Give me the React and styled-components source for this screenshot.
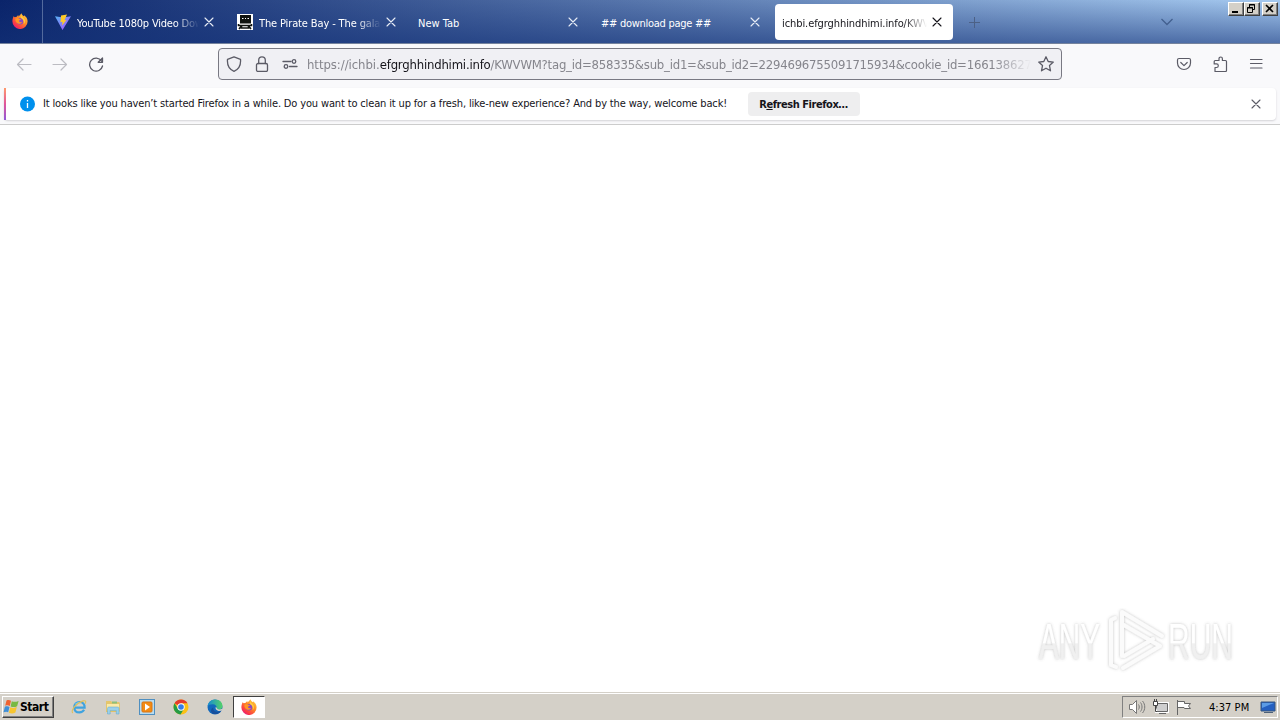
import React from 'react'
import styled, { createGlobalStyle } from 'styled-components'

const GlobalStyle = createGlobalStyle`
* { box-sizing: border-box; }
body {
margin: 0;
overflow: hidden;
background: #ffffff;
}
svg { display: block; flex: none; }
`

const Screen = styled.div`
width: 1280px;
height: 720px;
display: flex;
flex-direction: column;
font-family: "DejaVu Sans Condensed", "DejaVu Sans", sans-serif;
font-stretch: condensed;
font-size: 11px;
color: #15141a;
`

const TitleBar = styled.header`
height: 44px;
display: flex;
align-items: flex-start;
border-bottom: 1px solid #75839d;
background: linear-gradient(to bottom, rgba(20, 50, 120, 0) 0%, rgba(20, 50, 120, 0.58) 100%),
linear-gradient(to right, #0a246a, #a6caf0);
`

const ViewButton = styled.div`
width: 43px;
height: 43px;
padding: 13px 0 0 12px;
border-right: 1px solid #536a9d;
`

const Tabs = styled.div`
display: flex;
gap: 4px;
padding: 4px 0 0 4px;
`

const TabBox = styled.div`
width: 178px;
height: 36px;
display: flex;
align-items: center;
border-radius: 4px;
padding: 0 11px 0 8px;
gap: 5px;
color: ${props => props.$active ? '#15141a' : '#ffffff'};
background: ${props => props.$active ? '#ffffff' : 'transparent'};
`

const TabLabel = styled.span`
flex: 1;
height: 18px;
line-height: 18px;
margin-top: 3px;
margin-left: ${props => props.$shift || 0}px;
white-space: nowrap;
overflow: hidden;
letter-spacing: ${props => props.$spacing || 0}px;
mask-image: ${props => props.$fade ? 'linear-gradient(to left, transparent, black 24px)' : 'none'};
`

const NewTab = styled.div`
padding: 16px 0 0 15px;
`

const TabList = styled.div`
margin-left: auto;
padding: 16px 54px 0 0;
`

const WindowButtons = styled.div`
display: flex;
padding: 2px 2px 0 0;
`

const WindowButton = styled.div`
width: 16px;
height: 14px;
margin-left: ${props => props.$gap || 0}px;
background: #d4d0c8;
border: 1px solid;
border-color: #ffffff #404040 #404040 #ffffff;
box-shadow: inset -1px -1px #808080;
`

const Toolbar = styled.div`
height: 44px;
display: flex;
align-items: center;
padding: 0 16px 4px;
background: #f9f9fb;
`

const NavButtons = styled.div`
display: flex;
gap: 20px;
width: 202px;
`

const UrlBar = styled.div`
width: 844px;
height: 32px;
display: flex;
align-items: center;
padding: 0 7px;
border: 1px solid #797983;
border-radius: 4px;
background: #f0f0f4;
`

const UrlIcons = styled.div`
display: flex;
gap: 12px;
`

const UrlText = styled.div`
width: 724px;
margin: 2px 7px 0 9px;
font-size: 13px;
line-height: 22px;
letter-spacing: -0.22px;
white-space: nowrap;
overflow: hidden;
color: #85858c;
mask-image: linear-gradient(to left, transparent, black 38px);

b {
font-weight: 400;
letter-spacing: -0.2px;
color: #15141a;
}
`

const Scheme = styled.span`
letter-spacing: -0.05px;
`

const ToolbarEnd = styled.div`
display: flex;
gap: 20px;
margin-left: auto;
`

const NoticeArea = styled.div`
height: 37px;
padding: 0 4px;
background: #f9f9fb;
border-bottom: 1px solid #cccccc;
`

const Notice = styled.div`
height: 32px;
display: flex;
align-items: center;
background: #ffffff;
border-radius: 4px;
box-shadow: 0 1px 2px rgba(58, 57, 68, 0.2);
padding-right: 15px;
`

const Accent = styled.div`
width: 2px;
height: 32px;
margin-right: 13px;
background: linear-gradient(#ff9a6c, #e0559a 50%, #9059d8);
`

const NoticeText = styled.span`
width: 705px;
margin-left: 8px;
padding-bottom: 1px;
white-space: nowrap;
letter-spacing: -0.148px;
`

const RefreshButton = styled.button`
width: 112px;
height: 24px;
padding: 0 1px 0 0;
border: 0;
border-radius: 4px;
background: #eeeeef;
font: bold 11px "DejaVu Sans Condensed", "DejaVu Sans", sans-serif;
font-stretch: condensed;
letter-spacing: -0.45px;
color: #15141a;
`

const NoticeClose = styled.div`
margin-left: auto;
`

const Page = styled.main`
flex: 1;
display: flex;
justify-content: flex-end;
align-items: flex-end;
padding: 0 34px 18px 0;
`

const Taskbar = styled.footer`
height: 28px;
display: flex;
align-items: center;
padding: 1px 2px 0;
background: #d4d0c8;
border-top: 1px solid #d4d0c8;
box-shadow: inset 0 1px #ffffff;
`

const StartButton = styled.div`
width: 52px;
height: 22px;
display: flex;
align-items: center;
font-weight: bold;
font-size: 12px;
letter-spacing: -0.45px;
color: #000000;
border: 1px solid;
border-color: #ffffff #404040 #404040 #ffffff;
box-shadow: inset -1px -1px #808080;
`

const Launchers = styled.div`
display: flex;
align-items: center;
gap: 18px;
margin-left: 17px;
`

const RunningApp = styled.div`
width: 32px;
height: 22px;
margin-left: 10px;
padding: 2px 0 0 7px;
background: #ffffff;
border: 1px solid;
border-color: #404040 #ffffff #ffffff #404040;
`

const Tray = styled.div`
height: 22px;
width: 156px;
margin-left: auto;
display: flex;
align-items: center;
padding: 0 1px 0 5px;
border: 1px solid;
border-color: #808080 #ffffff #ffffff #808080;
`

const TrayIcons = styled.div`
display: flex;
gap: 6px;
`

const Clock = styled.span`
margin-left: 17px;
margin-right: auto;
letter-spacing: 0.05px;
color: #000000;
`

const Stroke = ({ size = 16, color = '#5b5b66', width = 1.2, children }) => (
    <svg width={size} height={size} viewBox="0 0 16 16" fill="none" stroke={color} strokeWidth={width} strokeLinecap="round" strokeLinejoin="round">
        {children}
    </svg>
)

const CloseIcon = ({ color }) => (
    <svg width="10" height="10" viewBox="0 0 10 10" stroke={color} strokeWidth="1.1" strokeLinecap="round">
        <path d="M1 1l8 8M9 1L1 9" />
    </svg>
)

const FirefoxIcon = () => (
    <svg width="16" height="16" viewBox="0 0 16 16">
        <defs>
            <linearGradient id="fox" x1="1" y1="0" x2="0.2" y2="1">
                <stop offset="0" stopColor="#ffe04a" />
                <stop offset="0.45" stopColor="#ff8a24" />
                <stop offset="0.8" stopColor="#fb3b47" />
                <stop offset="1" stopColor="#e31587" />
            </linearGradient>
        </defs>
        <path fill="url(#fox)" d="M1.6 3.2l1.1 1.1 2-.6L6.2 2l.4 1.4C7.6 2.6 8.4 1.6 9.5.3c.3 1.5 1.3 2.3 2.4 3l.1-1.1c2.2 1.4 3.6 3.5 3.6 6.2A7.6 7.6 0 0 1 .4 8.5c0-2 .5-3.7 1.2-5.3z" />
        <circle cx="8" cy="8.3" r="3.3" fill="#8a48c4" />
        <path fill="#ff9624" d="M3.5 5.5c1.6-.9 3.1-.7 4.2.4l1.5.2c-.6 1-1.3 1.2-2.1 1.5-.4 1.5 1.5 2.2 3.2 1.1-.8 2-2.8 2.6-4.5 1.8C3.7 9.5 3 7.3 3.5 5.5z" />
        <path fill="#ffce3b" d="M9.3 1.4c.2 2.8 3.5 3.1 3.7 6.4.1 1.6-.5 2.7-1.3 3.5.6-2.9-.2-4.8-2.2-5.9C8.5 4.6 8.4 3 9.3 1.4z" />
    </svg>
)

const VividIcon = () => (
    <svg width="16" height="16" viewBox="0 0 16 16">
        <defs>
            <linearGradient id="vee" x1="0" y1="0" x2="1" y2="1">
                <stop offset="0" stopColor="#55b5f5" />
                <stop offset="1" stopColor="#b14aff" />
            </linearGradient>
        </defs>
        <path d="M0 2.2L7.5 16 16 2.2 8 3.6z" fill="url(#vee)" />
        <path d="M12 .5L6 1.6 5.5 8.2l2-.4-.5 3.7L11.500 6l-2 .2z" fill="#ffc928" />
    </svg>
)

const PirateIcon = () => (
    <svg width="16" height="16" viewBox="0 0 16 16">
        <rect width="16" height="16" fill="#ffffff" />
        <path d="M3 1h11v8.5H3z" fill="#10130f" />
        <path d="M5 4.500h1.500M8 4.500h1M10.500 4.500H12" stroke="#ffffff" />
        <path d="M1.500 10v1.500h13V10M2 15l2-2.500M14 15l-2-2.500M4.500 11v3h7v-3" stroke="#10130f" strokeWidth="1.6" fill="none" />
    </svg>
)

const ChromeIcon = () => (
    <svg width="16" height="16" viewBox="0 0 16 16">
        <circle cx="8" cy="8" r="7.5" fill="#fbc116" />
        <path d="M8 8L1.5 4.25A7.5 7.5 0 0 1 14.5 4.25H8z" fill="#e33b2e" />
        <path d="M1.5 4.25A7.5 7.5 0 0 0 7.5 15.5L11 9.8 4.8 9.5z" fill="#259b45" />
        <circle cx="8" cy="8" r="3.7" fill="#ffffff" />
        <circle cx="8" cy="8" r="2.8" fill="#357de8" />
    </svg>
)

const EdgeIcon = () => (
    <svg width="16" height="16" viewBox="0 0 16 16">
        <defs>
            <linearGradient id="edge" x1="0" y1="0.3" x2="1" y2="0.3">
                <stop offset="0" stopColor="#168bd3" />
                <stop offset="1" stopColor="#54d268" />
            </linearGradient>
        </defs>
        <circle cx="8" cy="8" r="7.5" fill="#1268bc" />
        <path d="M.5 7.5C1 3.4 4 .5 8 .5c4.3 0 7.5 2.8 7.5 6.5 0 2.3-1.7 3.7-4 3.7-1.5 0-2.5-.6-1.9-1.5C10 7 8.500 5.200 5.700 5.200 3.300 5.200 1.300 6.100.5 7.500z" fill="url(#edge)" />
        <path d="M6.200 8.500c-.5 3.400 3 5.400 7.900 3.400-2 2.600-5.500 3.600-7.700 3C3 13.300 3.600 9.700 6.200 8.500z" fill="#174f9c" />
        <path d="M9 8.500c.3 2.600 3 3.300 6.500 2" stroke="#d4d0c8" strokeWidth="1.5" fill="none" />
    </svg>
)

const ExplorerIcon = () => (
    <svg width="16" height="16" viewBox="0 0 17 17" fill="none">
        <path d="M3.500 9.200h11c.2-4-2-6-5.400-6-3.500 0-5.600 2.400-5.600 5.700 0 3.500 2.400 5.300 5.500 5.300 2.400 0 4-1 4.900-2.700" stroke="#3fa3df" strokeWidth="2.3" />
        <path d="M4.500 5.500C6.500 4 8 3.800 10 4" stroke="#8cdaf7" />
        <path d="M2 14.800C-1 13 5 4.500 13 2c3-.7 3.200 1 2 3" stroke="#dfc05c" strokeWidth="1.2" />
    </svg>
)

const FolderIcon = () => (
    <svg width="16" height="16" viewBox="0 0 16 16">
        <path d="M1 2h5l1 1h7.500v10H1z" fill="#e5c66c" />
        <path d="M1.500 4.500h13V12h-13z" fill="#fbeaa8" stroke="#d9b85c" strokeWidth=".6" />
        <path d="M7 2.500h5v2H7z" fill="#8cc07a" />
        <path d="M2.500 15V9.500C2.500 8.500 3.100 8 4 8h8.500c1 0 1.500.5 1.500 1.500V15h-2.700v-3.500H5.200V15z" fill="#9ad0ea" stroke="#5ea7cd" strokeWidth=".5" />
    </svg>
)

const PlayerIcon = () => (
    <svg width="16" height="16" viewBox="0 0 16 16">
        <rect x=".5" y=".5" width="15" height="15" fill="#b8dcf0" stroke="#4f8fc0" />
        <rect x="3" y="3" width="10" height="10" rx="1" fill="#f38b13" stroke="#d97514" />
        <path d="M6 4.500L11 8l-5 3.500z" fill="#ffffff" />
    </svg>
)

const WindowsIcon = () => (
    <svg width="17" height="16" viewBox="0 0 17 16">
        <path d="M3.500 1.500C5 .7 6.700.9 8 1.800L6.800 7C5.500 6.200 4 6.200 2.200 6.800z" fill="#ef6331" />
        <path d="M8.800 2.200c1.700.9 4.200.8 6.800-.3l-1.500 5.300c-2 1.100-4.300 1.200-6.500.3z" fill="#78b943" />
        <path d="M1.900 7.800c1.700-.7 3.300-.6 4.600.2L5.200 13.300C3.900 12.500 2.400 12.600.5 13.300z" fill="#3f8fd7" />
        <path d="M7.300 8.300c2 .9 4.400.8 6.500-.2l-1.400 5.400c-2.100 1.100-4.300 1.200-6.500.2z" fill="#f7c52f" />
    </svg>
)

const Watermark = () => (
    <svg width="210" height="66" viewBox="0 0 210 66">
        <defs>
            <linearGradient id="mark" x1="0" y1="0" x2="0" y2="1">
                <stop offset="0.52" stopColor="#ffffff" />
                <stop offset="0.53" stopColor="#f0f0f0" />
            </linearGradient>
            <filter id="glow" x="-10%" y="-20%" width="120%" height="140%">
                <feDropShadow dx="0" dy="0" stdDeviation="1.6" floodColor="#777777" floodOpacity="0.45" />
            </filter>
        </defs>
        <g filter="url(#glow)" fill="url(#mark)" fontFamily="Liberation Sans Narrow, Liberation Sans, sans-serif" fontSize="50">
            <text x="3" y="51" textLength="61" lengthAdjust="spacingAndGlyphs">ANY</text>
            <text x="132" y="51" textLength="65" lengthAdjust="spacingAndGlyphs">RUN</text>
        </g>
        <g filter="url(#glow)" fill="none" stroke="#fbfbfb" strokeWidth="4" strokeLinejoin="round" strokeLinecap="round">
            <path d="M86 48V4l40 24M86 16l38 22L87 60M79 10l-4 2v45l5 2M88 48l29-17" />
        </g>
    </svg>
)

const tabs = [
    { title: 'YouTube 1080p Video Dow', icon: <VividIcon />, fade: true, shift: 1, spacing: -0.2 },
    { title: 'The Pirate Bay - The gala', icon: <PirateIcon />, fade: true, shift: 1, spacing: -0.13 },
    { title: 'New Tab', shift: -1, spacing: 0 },
    { title: '## download page ##', spacing: -0.27 },
    { title: 'ichbi.efgrghhindhimi.info/KWV', active: true, fade: true, shift: -1, spacing: -0.08 },
]

function App() {

    const tabsNaTela = tabs.map((tab) => {
        return <TabBox key={tab.title} $active={tab.active}>
            {tab.icon}
            <TabLabel $fade={tab.fade} $shift={tab.shift} $spacing={tab.spacing}>{tab.title}</TabLabel>
            <CloseIcon color={tab.active ? '#15141a' : '#e8edf6'} />
        </TabBox>
    })

    return (
        <Screen>
            <GlobalStyle />

            <TitleBar>
                <ViewButton><FirefoxIcon /></ViewButton>
                <Tabs>{tabsNaTela}</Tabs>
                <NewTab>
                    <svg width="12" height="12" viewBox="0 0 12 12" stroke="#4c6186"><path d="M6.5 1v11M1 6.5h11" /></svg>
                </NewTab>
                <TabList>
                    <svg width="14" height="12" viewBox="0 0 14 12" fill="none" stroke="#43608f" strokeWidth="1.3"><path d="M1.5 3L7 8.5 12.5 3" /></svg>
                </TabList>
                <WindowButtons>
                    <WindowButton>
                        <svg width="14" height="12"><rect x="3" y="8" width="6" height="2" /></svg>
                    </WindowButton>
                    <WindowButton>
                        <svg width="14" height="12" fill="none" stroke="#000000"><path d="M4.5 4V1.5h5v5H8M4 2h6M2.5 4.5h5v5h-5zM2 5h6" /></svg>
                    </WindowButton>
                    <WindowButton $gap={2}>
                        <svg width="14" height="12" stroke="#000000" strokeWidth="1.6"><path d="M3 2l7 7M10 2L3 9" /></svg>
                    </WindowButton>
                </WindowButtons>
            </TitleBar>

            <Toolbar>
                <NavButtons>
                    <Stroke color="#bcbcc2"><path d="M15 8.5H1.5M7 3L1.5 8.5 7 14" /></Stroke>
                    <Stroke color="#bcbcc2"><path d="M1 8.5h13.5M9 3l5.5 5.5L9 14" /></Stroke>
                    <Stroke width={1.3}><path d="M13.5 5A6.5 6.5 0 1 0 14.5 10M14.5 2v4.3h-4.3z" /></Stroke>
                </NavButtons>
                <UrlBar>
                    <UrlIcons>
                        <Stroke width={1.3}><path d="M8 .8l6.5 2.5c.5 5.6-1.5 10-6.5 12-5-2-7-6.4-6.5-12z" /></Stroke>
                        <Stroke width={1.3}><rect x="2.5" y="7.5" width="11" height="8" rx="1.5" /><path d="M4.7 7.5V4.2a3.3 3.3 0 0 1 6.6 0v3.3" /></Stroke>
                        <Stroke width={1.3}><path d="M1 5.5h8M7.5 10.5H15" /><circle cx="12" cy="5.5" r="1.8" /><circle cx="4" cy="10.5" r="1.8" /></Stroke>
                    </UrlIcons>
                    <UrlText><Scheme>https://ichbi.</Scheme><b>efgrghhindhimi.info</b>/KWVWM?tag_id=858335&amp;sub_id1=&amp;sub_id2=2294696755091715934&amp;cookie_id=166138627</UrlText>
                    <Stroke width={1.3}><path d="M8 .8l2.2 4.7 5.1.6-3.8 3.5 1 5.2L8 12.2l-4.5 2.6 1-5.2L.7 6.1l5.1-.6z" /></Stroke>
                </UrlBar>
                <ToolbarEnd>
                    <Stroke><path d="M3 2.5h10c1 0 1.5.5 1.5 1.5v3a6.5 6.5 0 0 1-13 0V4c0-1 .5-1.5 1.5-1.5zM4.8 6.5L8 9.6l3.2-3.1" /></Stroke>
                    <Stroke><path d="M3 15.5v-4h1.5a1.8 1.8 0 0 0 0-3.6H2.2V5.5c0-.6.4-1 1-1H7V2.7a1.7 1.7 0 0 1 3.4 0v1.8h3.1a1 1 0 0 1 1 1v9a1 1 0 0 1-1 1z" /></Stroke>
                    <Stroke><path d="M2.5 3.5h11.5M2.5 7.5h11.5M2.5 12h11.5" /></Stroke>
                </ToolbarEnd>
            </Toolbar>

            <NoticeArea>
                <Notice>
                    <Accent />
                    <svg width="16" height="16" viewBox="0 0 16 16">
                        <circle cx="8.5" cy="8" r="7.5" fill="#0090ed" />
                        <path d="M8.5 4v1.5M8.5 7v5" stroke="#ffffff" strokeWidth="1.3" />
                    </svg>
                    <NoticeText>It looks like you haven’t started Firefox in a while. Do you want to clean it up for a fresh, like-new experience? And by the way, welcome back!</NoticeText>
                    <RefreshButton>R<u>e</u>fresh Firefox…</RefreshButton>
                    <NoticeClose><CloseIcon color="#5b5b66" /></NoticeClose>
                </Notice>
            </NoticeArea>

            <Page><Watermark /></Page>

            <Taskbar>
                <StartButton><WindowsIcon />Start</StartButton>
                <Launchers>
                    <ExplorerIcon />
                    <FolderIcon />
                    <PlayerIcon />
                    <ChromeIcon />
                    <EdgeIcon />
                </Launchers>
                <RunningApp><FirefoxIcon /></RunningApp>
                <Tray>
                    <TrayIcons>
                        <svg width="18" height="16" viewBox="0 0 18 16" fill="none" stroke="#777777">
                            <path d="M1.5 5.5h3l4-4v13l-4-4h-3z" fill="#ffffff" />
                            <path d="M10.5 5.5c1 1.5 1 3.5 0 5M12.5 3.5c2 2.5 2 6.5 0 9M14.5 2c3 3.5 3 8.5 0 12" />
                        </svg>
                        <svg width="18" height="16" viewBox="0 0 18 16" fill="none" stroke="#666666">
                            <path d="M4.5 4.5h11v8h-11z" fill="#d0d0d0" stroke="#ffffff" strokeWidth="3" />
                            <path d="M4.5 4.5h11v8h-11zM7 14.5h7" fill="#cfcfcf" />
                            <path d="M1.5 2.5h4v4h-4zM2.5 0v2M4.5 0v2M3.5 7v5.5h2" fill="#ffffff" stroke="#444444" />
                        </svg>
                        <svg width="16" height="16" viewBox="0 0 16 16" fill="#ffffff" stroke="#666666">
                            <path d="M1.5 1v15M2 2.5h6.5v2h6l-2 2.5 2 2.5h-6l-.5-1H2" />
                        </svg>
                    </TrayIcons>
                    <Clock>4:37 PM</Clock>
                    <svg width="16" height="16" viewBox="0 0 16 16">
                        <path d="M1 3h14v9H1z" fill="#245fc0" stroke="#37577f" />
                        <path d="M2 4h12L2 9z" fill="#5b9be5" />
                        <path d="M4 13h9v1H4z" fill="#4c6079" />
                    </svg>
                </Tray>
            </Taskbar>
        </Screen>
    )
}

export default App
